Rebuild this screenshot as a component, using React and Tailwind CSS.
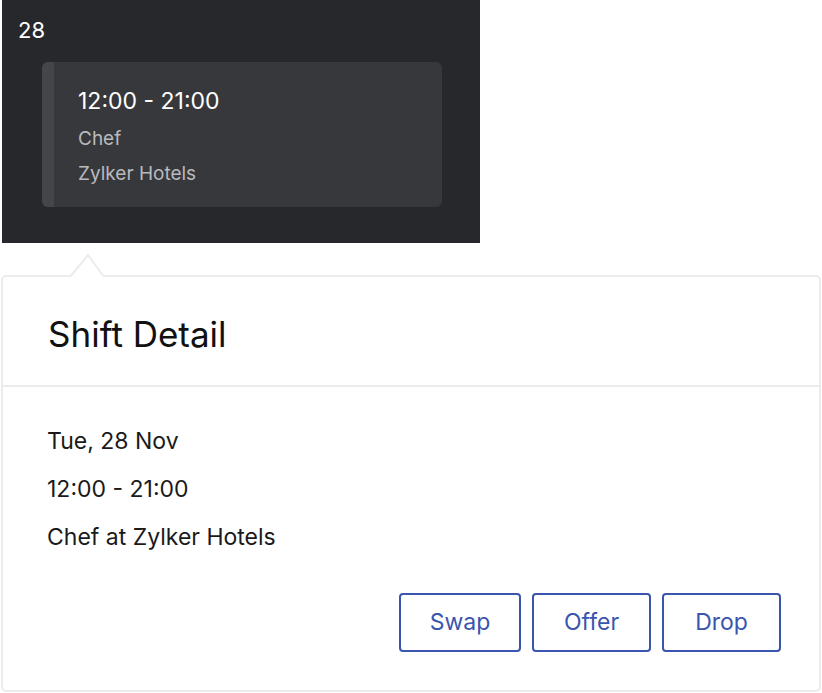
export default function App() {
  return (
    <div className="w-[822px] h-[693px] bg-white relative font-['Inter','Noto_Sans',sans-serif]">
      {/* calendar cell */}
      <div className="ml-[2px] w-[478px] h-[243px] bg-[#27282c] pt-[16px]">
        <div className="pl-[16px] text-[22px] leading-[28px] text-white">28</div>
        <div className="ml-[40px] mt-[18px] w-[400px] h-[145px] rounded-[6px] bg-[#37383c] flex overflow-hidden">
          <div className="w-[12px] bg-[#45464b]" />
          <div className="pl-[24px] pt-[24px]">
            <div className="text-[23px] leading-[30px] text-white">12:00 - 21:00</div>
            <div className="mt-[9px] text-[19px] leading-[28px] text-[#b9babd]">Chef</div>
            <div className="mt-[7px] text-[19px] leading-[28px] text-[#b9babd]">Zylker Hotels</div>
          </div>
        </div>
      </div>

      {/* popover */}
      <div className="relative mt-[32px] ml-[1px] w-[820px] h-[417px] border-2 border-[#ececec] rounded-[5px] bg-white">
        <svg
          className="absolute left-[66px] top-[-24px]"
          width="36"
          height="26"
          viewBox="0 0 36 26"
        >
          <path d="M1 24 L19 2 L35 24" fill="white" stroke="#ececec" strokeWidth="2" />
          <rect x="2" y="23" width="32" height="4" fill="white" />
        </svg>
        <div className="h-[110px] border-b-2 border-[#ececec] flex items-center pl-[45px]">
          <h1 className="text-[35px] leading-[40px] text-[#111] pt-[6px]">Shift Detail</h1>
        </div>
        <div className="pl-[44px] pt-[40px] text-[23px] leading-[28px] text-[#1a1a1a]">
          <p>Tue, 28 Nov</p>
          <p className="mt-[20px]">12:00 - 21:00</p>
          <p className="mt-[20px]">Chef at Zylker Hotels</p>
        </div>
        <div className="flex justify-end gap-[11px] pr-[38px] mt-[42px]">
          {["Swap", "Offer", "Drop"].map((label, i) => (
            <button
              key={label}
              className={
                "h-[59px] border-2 border-[#3a55ad] rounded-[4px] text-[23px] text-[#3a55ad] " +
                (i === 0 ? "w-[122px]" : "w-[119px]")
              }
            >
              {label}
            </button>
          ))}
        </div>
      </div>
    </div>
  );
}
